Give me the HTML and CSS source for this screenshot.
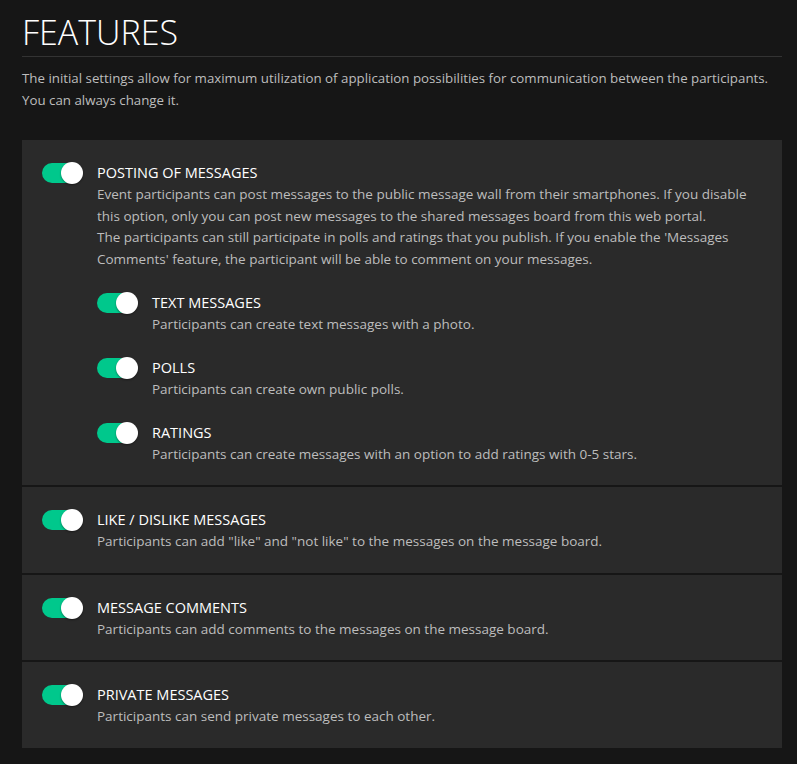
FILE: index.html
```html
<!DOCTYPE html>
<html lang="en">
<head>
    <meta charset="UTF-8">
    <meta name="viewport" content="width=device-width, initial-scale=1.0">
    <title>Features</title>
    <link rel="stylesheet" href="styles.css">
</head>
<body>

<div class="page">
    <header class="page-header">
        <h1>FEATURES</h1>
        <p>The initial settings allow for maximum utilization of application possibilities for communication between the participants. You can always change it.</p>
    </header>

    <!-- Posting of messages -->
    <section class="card">
        <div class="feature">
            <label class="switch"><input type="checkbox" checked><span class="slider"></span></label>
            <div class="feature-text">
                <h3>POSTING OF MESSAGES</h3>
                <p>Event participants can post messages to the public message wall from their smartphones. If you disable this option, only you can post new messages to the shared messages board from this web portal.</p>
                <p>The participants can still participate in polls and ratings that you publish. If you enable the 'Messages Comments' feature, the participant will be able to comment on your messages.</p>

                <div class="sub-features">
                    <div class="feature">
                        <label class="switch"><input type="checkbox" checked><span class="slider"></span></label>
                        <div class="feature-text">
                            <h3>TEXT MESSAGES</h3>
                            <p>Participants can create text messages with a photo.</p>
                        </div>
                    </div>
                    <div class="feature">
                        <label class="switch"><input type="checkbox" checked><span class="slider"></span></label>
                        <div class="feature-text">
                            <h3>POLLS</h3>
                            <p>Participants can create own public polls.</p>
                        </div>
                    </div>
                    <div class="feature">
                        <label class="switch"><input type="checkbox" checked><span class="slider"></span></label>
                        <div class="feature-text">
                            <h3>RATINGS</h3>
                            <p>Participants can create messages with an option to add ratings with 0-5 stars.</p>
                        </div>
                    </div>
                </div>
            </div>
        </div>
    </section>

    <section class="card">
        <div class="feature">
            <label class="switch"><input type="checkbox" checked><span class="slider"></span></label>
            <div class="feature-text">
                <h3>LIKE / DISLIKE MESSAGES</h3>
                <p>Participants can add "like" and "not like" to the messages on the message board.</p>
            </div>
        </div>
    </section>

    <section class="card">
        <div class="feature">
            <label class="switch"><input type="checkbox" checked><span class="slider"></span></label>
            <div class="feature-text">
                <h3>MESSAGE COMMENTS</h3>
                <p>Participants can add comments to the messages on the message board.</p>
            </div>
        </div>
    </section>

    <section class="card">
        <div class="feature">
            <label class="switch"><input type="checkbox" checked><span class="slider"></span></label>
            <div class="feature-text">
                <h3>PRIVATE MESSAGES</h3>
                <p>Participants can send private messages to each other.</p>
            </div>
        </div>
    </section>
</div>

</body>
</html>
```

FILE: styles.css
```css
/* General */
body {
    font-family: 'Open Sans', 'Liberation Sans', sans-serif;
    margin: 0;
    padding: 0;
    background-color: #161616;
    color: #bdbdbd;
}
.page {
    margin: 0 15px 0 22px;
    padding-bottom: 17px;
}

/* Header */
.page-header h1 {
    font-size: 34px;
    font-weight: 300;
    color: #fff;
    margin: 0;
    padding: 10px 0 2px;
    line-height: 44px;
    border-bottom: 1px solid #333;
}
.page-header p {
    font-size: 13.3px;
    line-height: 22px;
    margin: 10px 0 29px;
}

/* Cards */
.card {
    background: #2a2a2a;
    padding: 22px 20px 20px 20px;
    margin-bottom: 2px;
}
.feature {
    display: flex;
    gap: 15px;
}
.feature-text {
    flex: 1;
}
.feature-text h3 {
    font-size: 14.5px;
    font-weight: 400;
    color: #fff;
    margin: 0;
    line-height: 22px;
}
.feature-text p {
    font-size: 13.5px;
    line-height: 21.5px;
    margin: 0;
}
.sub-features {
    display: flex;
    flex-direction: column;
    gap: 21.5px;
    margin-top: 21.5px;
}

/* Toggle switch */
.switch {
    position: relative;
    display: block;
    flex: none;
    width: 40px;
    height: 20px;
    margin-top: 1px;
}
.switch input {
    display: none;
}
.slider {
    position: absolute;
    inset: 0;
    background: #00c88c;
    border-radius: 10px;
}
.slider::after {
    content: "";
    position: absolute;
    top: -1px;
    right: -1px;
    width: 22px;
    height: 22px;
    border-radius: 50%;
    background: #fff;
    box-shadow: 0 1px 2px rgba(0, 0, 0, 0.4);
}
```
